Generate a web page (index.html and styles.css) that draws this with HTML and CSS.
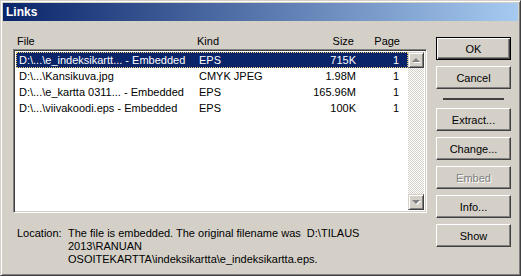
FILE: index.html
```html
<!DOCTYPE html>
<html lang="en">
<head>
  <meta charset="UTF-8">
  <title>Links</title>
  <link rel="stylesheet" href="styles.css">
</head>
<body>
  <div class="window">
    <div class="titlebar">Links</div>
    <div class="client">
      <div class="left-pane">
        <div class="columns header">
          <span>File</span>
          <span>Kind</span>
          <span class="num">Size</span>
          <span class="num page-head">Page</span>
        </div>
        <div class="listbox">
          <div class="rows">
            <div class="columns row selected">
              <span>D:\...\e_indeksikartt... - Embedded</span>
              <span>EPS</span>
              <span class="num">715K</span>
              <span class="num">1</span>
            </div>
            <div class="columns row">
              <span>D:\...\Kansikuva.jpg</span>
              <span>CMYK JPEG</span>
              <span class="num">1.98M</span>
              <span class="num">1</span>
            </div>
            <div class="columns row">
              <span>D:\...\e_kartta 0311... - Embedded</span>
              <span>EPS</span>
              <span class="num">165.96M</span>
              <span class="num">1</span>
            </div>
            <div class="columns row">
              <span>D:\...\viivakoodi.eps - Embedded</span>
              <span>EPS</span>
              <span class="num">100K</span>
              <span class="num">1</span>
            </div>
          </div>
          <div class="scrollbar">
            <div class="scroll-btn"><span class="arrow up"></span></div>
            <div class="track"></div>
            <div class="scroll-btn"><span class="arrow down"></span></div>
          </div>
        </div>
        <div class="location">
          <span class="loc-label">Location:</span>
          <span class="loc-text">The file is embedded. The original filename was&nbsp; D:\TILAUS<br>2013\RANUAN<br>OSOITEKARTTA\indeksikartta\e_indeksikartta.eps.</span>
        </div>
      </div>
      <div class="buttons">
        <button class="btn default">OK</button>
        <button class="btn">Cancel</button>
        <div class="separator"></div>
        <button class="btn">Extract...</button>
        <button class="btn">Change...</button>
        <button class="btn disabled">Embed</button>
        <button class="btn">Info...</button>
        <button class="btn">Show</button>
      </div>
    </div>
  </div>
</body>
</html>
```

FILE: styles.css
```css
body {
  margin: 0;
  font-family: "Liberation Sans", Arial, sans-serif;
  font-size: 11px;
  color: #000;
  background-color: #d4d0c8;
}

.window {
  box-sizing: border-box;
  width: 521px;
  height: 276px;
  background-color: #d4d0c8;
  border: 1px solid;
  border-color: #d4d0c8 #404040 #404040 #d4d0c8;
  box-shadow: inset 1px 1px #fff, inset -1px -1px #808080;
  padding: 2px;
}

.titlebar {
  height: 18px;
  line-height: 18px;
  padding-left: 3px;
  color: #fff;
  font-size: 12px;
  font-weight: bold;
  background: linear-gradient(to right, #0a246a, #a6caf0);
}

.client {
  display: flex;
  padding: 0 5px 0 10px;
}

.left-pane {
  width: 414px;
  padding-top: 12px;
}

.columns {
  display: grid;
  grid-template-columns: 180px 100px 57px 43px;
  white-space: nowrap;
}

.num {
  text-align: right;
}

.header {
  height: 16px;
  line-height: 16px;
  padding-left: 4px;
}

.page-head {
  margin-right: -3px;
}

.listbox {
  display: flex;
  height: 164px;
  box-sizing: border-box;
  border: 1px solid;
  border-color: #808080 #fff #fff #808080;
  box-shadow: inset 1px 1px #404040, inset -1px -1px #d4d0c8;
  background-color: #fff;
  padding: 2px;
}

.rows {
  flex: 1;
}

.row {
  height: 16px;
  line-height: 16px;
  padding-left: 3px;
  box-sizing: border-box;
}

.row.selected {
  background-color: #0a246a;
  color: #fff;
  outline: 1px dotted #f0d070;
  outline-offset: -1px;
}

.scrollbar {
  width: 16px;
  display: flex;
  flex-direction: column;
}

.scroll-btn {
  box-sizing: border-box;
  height: 16px;
  background-color: #d4d0c8;
  border: 1px solid;
  border-color: #d4d0c8 #404040 #404040 #d4d0c8;
  box-shadow: inset 1px 1px #fff, inset -1px -1px #808080;
  display: flex;
  align-items: center;
  justify-content: center;
}

.arrow {
  width: 0;
  height: 0;
  border-left: 4px solid transparent;
  border-right: 4px solid transparent;
  filter: drop-shadow(1px 1px 0 #fff);
}

.arrow.up {
  border-bottom: 4px solid #808080;
}

.arrow.down {
  border-top: 4px solid #808080;
}

.track {
  flex: 1;
  background: repeating-conic-gradient(#fff 0 25%, #d4d0c8 0 50%) 0 0 / 2px 2px;
}

.location {
  display: flex;
  margin-top: 14px;
  padding-left: 4px;
  line-height: 13px;
}

.loc-label {
  width: 51px;
}

.buttons {
  margin-left: 9px;
  padding-top: 16px;
  width: 75px;
  display: flex;
  flex-direction: column;
  gap: 6px;
}

.btn {
  box-sizing: border-box;
  width: 75px;
  height: 23px;
  padding: 0;
  font-family: inherit;
  font-size: 11px;
  color: #000;
  background-color: #d4d0c8;
  border: 1px solid;
  border-color: #fff #404040 #404040 #fff;
  box-shadow: inset -1px -1px #808080, inset 1px 1px #d4d0c8;
}

.btn.default {
  border: 1px solid #000;
  box-shadow: inset 1px 1px #fff, inset -1px -1px #404040, inset -2px -2px #808080;
}

.btn.disabled {
  color: #808080;
  text-shadow: 1px 1px #fff;
}

.separator {
  margin: 3px 7px 2px;
  height: 2px;
  background-color: #404040;
}
```
